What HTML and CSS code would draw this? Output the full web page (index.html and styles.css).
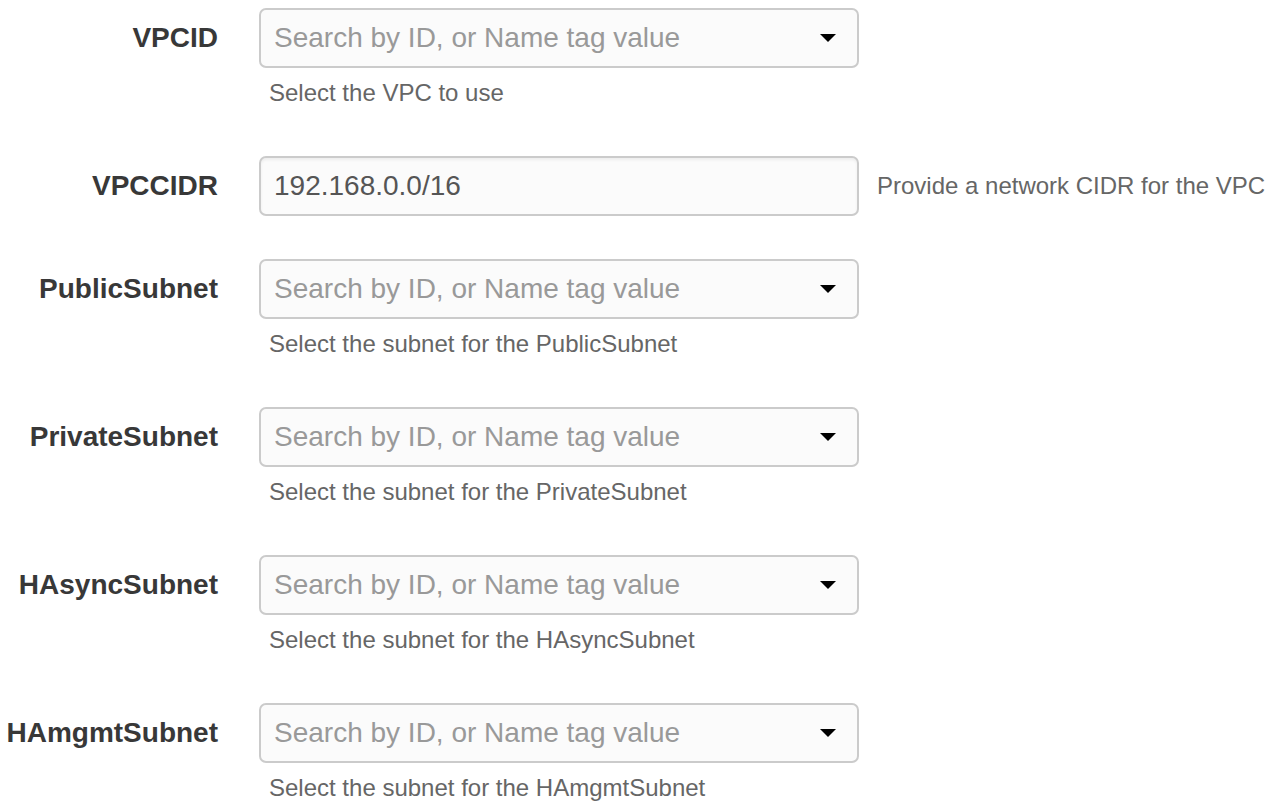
FILE: index.html
```html
<!DOCTYPE html>
<html>
<head>
<meta charset="utf-8">
<link rel="stylesheet" href="styles.css">
</head>
<body>
<form class="form">
  <div class="group">
    <label class="label">VPCID</label>
    <div class="control">
      <div class="select"><span class="placeholder">Search by ID, or Name tag value</span><svg class="caret" width="16" height="8" viewBox="0 0 16 8"><path d="M0 0H16L8 8Z" fill="#000"/></svg></div>
      <div class="help">Select the VPC to use</div>
    </div>
  </div>
  <div class="group group-inline">
    <label class="label">VPCCIDR</label>
    <div class="control inline">
      <div class="input">192.168.0.0/16</div>
      <div class="help-inline">Provide a network CIDR for the VPC</div>
    </div>
  </div>
  <div class="group">
    <label class="label">PublicSubnet</label>
    <div class="control">
      <div class="select"><span class="placeholder">Search by ID, or Name tag value</span><svg class="caret" width="16" height="8" viewBox="0 0 16 8"><path d="M0 0H16L8 8Z" fill="#000"/></svg></div>
      <div class="help">Select the subnet for the PublicSubnet</div>
    </div>
  </div>
  <div class="group">
    <label class="label">PrivateSubnet</label>
    <div class="control">
      <div class="select"><span class="placeholder">Search by ID, or Name tag value</span><svg class="caret" width="16" height="8" viewBox="0 0 16 8"><path d="M0 0H16L8 8Z" fill="#000"/></svg></div>
      <div class="help">Select the subnet for the PrivateSubnet</div>
    </div>
  </div>
  <div class="group">
    <label class="label">HAsyncSubnet</label>
    <div class="control">
      <div class="select"><span class="placeholder">Search by ID, or Name tag value</span><svg class="caret" width="16" height="8" viewBox="0 0 16 8"><path d="M0 0H16L8 8Z" fill="#000"/></svg></div>
      <div class="help">Select the subnet for the HAsyncSubnet</div>
    </div>
  </div>
  <div class="group">
    <label class="label">HAmgmtSubnet</label>
    <div class="control">
      <div class="select"><span class="placeholder">Search by ID, or Name tag value</span><svg class="caret" width="16" height="8" viewBox="0 0 16 8"><path d="M0 0H16L8 8Z" fill="#000"/></svg></div>
      <div class="help">Select the subnet for the HAmgmtSubnet</div>
    </div>
  </div>
</form>
</body>
</html>
```

FILE: styles.css
```css
html, body {
  margin: 0;
  padding: 0;
  background: #fff;
}
body {
  font-family: "Liberation Sans", Arial, sans-serif;
  padding-top: 8px;
  overflow: hidden;
}
.group {
  display: flex;
  align-items: flex-start;
  margin-bottom: 44px;
}
.group-inline {
  margin-bottom: 43px;
}
.group:last-child {
  margin-bottom: 0;
}
.label {
  width: 218px;
  margin-right: 41px;
  flex-shrink: 0;
  text-align: right;
  font-weight: bold;
  font-size: 28px;
  line-height: 60px;
  color: #383838;
}
.control {
  display: flex;
  flex-direction: column;
}
.control.inline {
  flex-direction: row;
  align-items: center;
}
.select, .input {
  box-sizing: border-box;
  width: 600px;
  height: 60px;
  border: 2px solid #cbcbcb;
  border-radius: 7px;
  background: #fbfbfb;
  display: flex;
  align-items: center;
  padding: 0 21px 0 13px;
  font-size: 28px;
}
.input {
  color: #555;
  box-shadow: inset 0 2px 3px rgba(0,0,0,0.06);
}
.placeholder {
  flex: 1;
  color: #999;
  white-space: nowrap;
}
.caret {
  display: block;
  flex-shrink: 0;
}
.help {
  margin-top: 8px;
  margin-bottom: 2px;
  padding-left: 10px;
  font-size: 24px;
  line-height: 34px;
  color: #666;
}
.help-inline {
  margin-left: 18px;
  font-size: 24px;
  color: #666;
  white-space: nowrap;
}
```
